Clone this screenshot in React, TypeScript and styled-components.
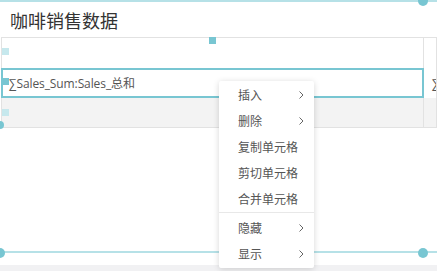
import styled, { createGlobalStyle } from "styled-components";

const GlobalStyle = createGlobalStyle`
  html, body { margin: 0; padding: 0; background: #fff; }
  body { font-family: "Open Sans", "Noto Sans CJK SC", sans-serif; }
`;

const TEAL = "#78c6d2";
const TEAL_LIGHT = "#b6e1e7";
const GRID = "#e2e2e2";

const Page = styled.div`
  position: relative;
  width: 437px;
  height: 271px;
  overflow: hidden;
  display: flex;
  flex-direction: column;
  background: #fff;
`;

const FrameLine = styled.div`
  height: 2px;
  flex: none;
  background: ${TEAL_LIGHT};
`;

const Title = styled.div`
  height: 35px;
  flex: none;
  display: flex;
  align-items: center;
  padding-left: 10px;
  font-size: 18px;
  color: #333;
  box-sizing: border-box;
`;

const Table = styled.div`
  flex: none;
  margin-left: 1px;
  border-top: 1px solid ${GRID};
  border-left: 1px solid ${GRID};
`;

const Row = styled.div<{ $h: number; $shade?: boolean }>`
  display: grid;
  grid-template-columns: 422px 1fr;
  height: ${(p) => p.$h}px;
  border-bottom: ${(p) => (p.$shade ? `1px solid ${GRID}` : "none")};
  background: ${(p) => (p.$shade ? "#f3f3f3" : "transparent")};
`;

const Cell = styled.div<{ $selected?: boolean }>`
  display: flex;
  align-items: center;
  border-right: 1px solid ${GRID};
  font-size: 12px;
  color: #555;
  white-space: nowrap;
  overflow: hidden;
  letter-spacing: -0.1px;
  outline: ${(p) => (p.$selected ? `2px solid ${TEAL}` : "none")};
  outline-offset: -2px;
  margin-left: ${(p) => (p.$selected ? "-1px" : "0")};
  padding-left: 8px;
`;

const Filler = styled.div`
  flex: 1;
`;

const BottomArea = styled.div`
  height: 12px;
  flex: none;
`;

const Band = styled.div`
  height: 6px;
  flex: none;
  background: #f1f1f3;
`;

const Square = styled.div<{ $light?: boolean }>`
  position: absolute;
  width: 7px;
  height: 7px;
  background: ${(p) => (p.$light ? "#c6e8ed" : TEAL)};
`;

const Dot = styled.div`
  position: absolute;
  width: 10px;
  height: 10px;
  border-radius: 50%;
  background: ${TEAL};
  transform: translate(-50%, -50%);
`;

const Menu = styled.div`
  position: absolute;
  left: 219px;
  top: 81px;
  width: 95px;
  padding: 1px 0;
  background: #fff;
  border-radius: 2px;
  box-shadow: 0 1px 6px rgba(0, 0, 0, 0.16);
`;

const MenuItem = styled.div`
  height: 26px;
  display: flex;
  align-items: center;
  justify-content: space-between;
  padding: 0 10px 0 19px;
  font-size: 12px;
  color: #555;
`;

const Divider = styled.div`
  height: 1px;
  margin: 0 0 2px;
  background: #e8e8e8;
`;

const Chevron = () => (
  <svg width="5" height="8" viewBox="0 0 5 8">
    <path d="M0.5 0.5 L4 4 L0.5 7.5" fill="none" stroke="#666" strokeWidth="1" />
  </svg>
);

export default function App() {
  return (
    <>
      <GlobalStyle />
      <Page>
        <FrameLine />
        <Title>咖啡销售数据</Title>
        <Table>
          <Row $h={30}>
            <Cell />
            <Cell />
          </Row>
          <Row $h={30}>
            <Cell $selected>∑Sales_Sum:Sales_总和</Cell>
            <Cell>∑Sales</Cell>
          </Row>
          <Row $h={29} $shade>
            <Cell />
            <Cell />
          </Row>
        </Table>
        <Filler />
        <FrameLine />
        <BottomArea />
        <Band />

        <Square style={{ left: 209, top: 37 }} />
        <Square $light style={{ left: 2, top: 48 }} />
        <Square style={{ left: 2, top: 78 }} />
        <Square $light style={{ left: 2, top: 109 }} />
        <Dot style={{ left: 0, top: 125, width: 8, height: 8 }} />
        <Dot style={{ left: 423, top: 1 }} />
        <Dot style={{ left: 0, top: 253 }} />
        <Dot style={{ left: 423, top: 253 }} />

        <Menu>
          <MenuItem>插入<Chevron /></MenuItem>
          <MenuItem>删除<Chevron /></MenuItem>
          <MenuItem>复制单元格</MenuItem>
          <MenuItem>剪切单元格</MenuItem>
          <MenuItem>合并单元格</MenuItem>
          <Divider />
          <MenuItem>隐藏<Chevron /></MenuItem>
          <MenuItem>显示<Chevron /></MenuItem>
        </Menu>
      </Page>
    </>
  );
}
